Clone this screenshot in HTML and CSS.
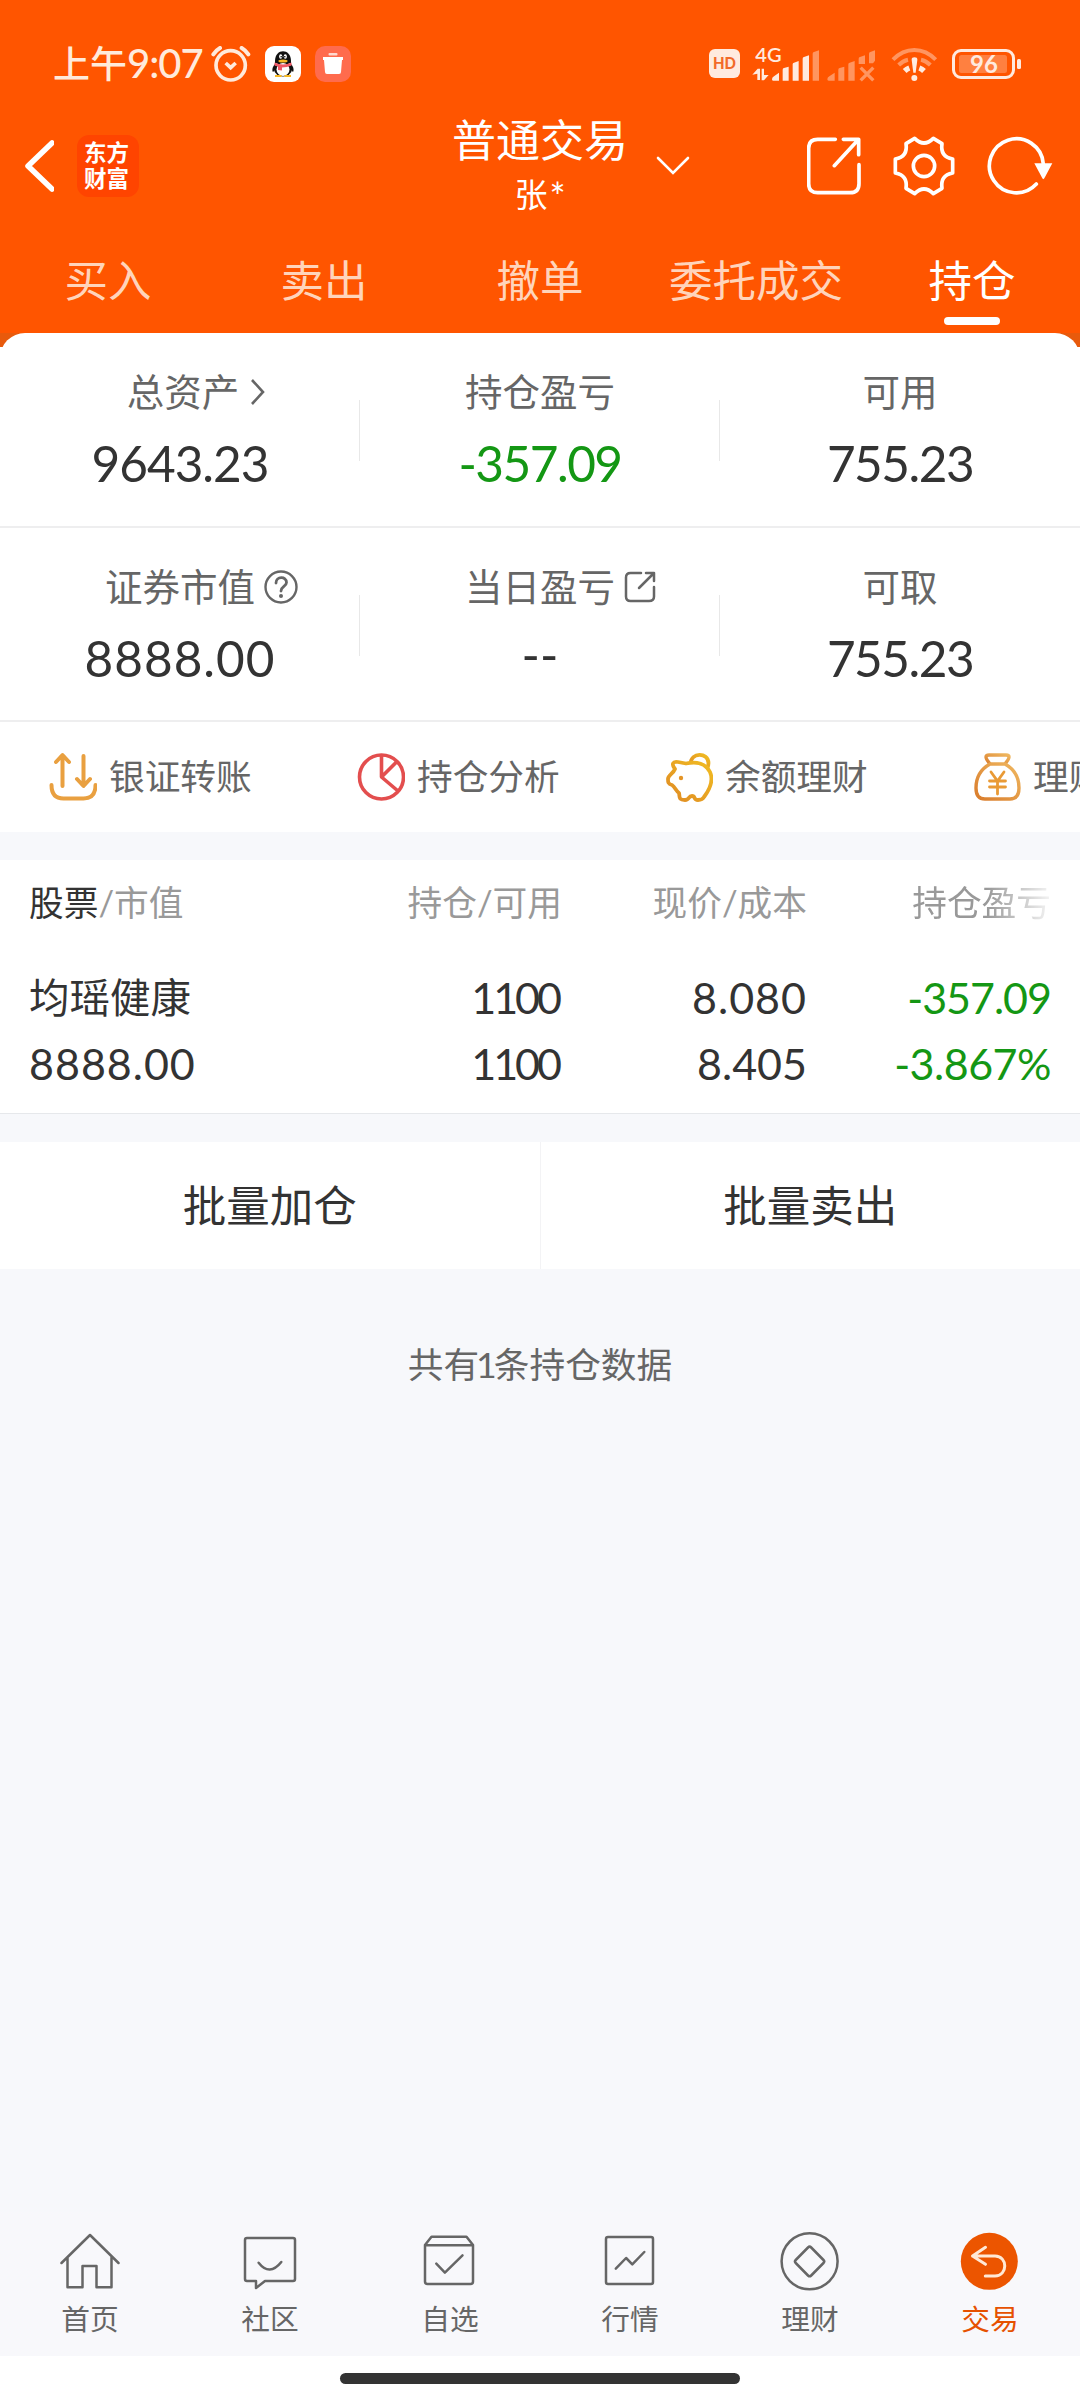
FILE: index.html
```html
<!DOCTYPE html>
<html lang="zh-CN">
<head>
    <meta charset="UTF-8">
    <meta name="viewport" content="width=device-width, initial-scale=1.0">
    <title>普通交易 - 持仓</title>
    <link rel="stylesheet" href="styles.css">
</head>
<body>
    <header class="header">
        <div class="status-bar">
            <span class="time">上午<span class="time-num">9:07</span></span>
            <svg class="alarm" width="40" height="36" viewBox="632 78 120 108">
                <g fill="none" stroke="#ffeadb" stroke-linecap="round">
                    <circle cx="691" cy="136" r="44" stroke-width="11"/>
                    <path d="M676 129l15 14 15-14" stroke-width="11" stroke-linecap="butt"/>
                    <path d="M639 103q8-12 20-19M744 103q-8-12-20-19" stroke-width="12"/>
                </g>
            </svg>
            <svg class="app-icon" width="36" height="36" viewBox="0 0 36 36">
                <rect width="36" height="36" rx="9" fill="#fff"/>
                <path d="M10 18c-3 3-3 7-2 8l2-2zM26 18c3 3 3 7 2 8l-2-2z" fill="#111"/>
                <ellipse cx="18" cy="23" rx="9" ry="7.5" fill="#111"/>
                <ellipse cx="18" cy="23.5" rx="6.5" ry="6.5" fill="#fff"/>
                <path d="M10 15c0-13 16-13 16 0v2H10z" fill="#111"/>
                <ellipse cx="15.7" cy="10.5" rx="1.6" ry="2.2" fill="#fff"/>
                <ellipse cx="20.3" cy="10.5" rx="1.6" ry="2.2" fill="#fff"/>
                <circle cx="16.2" cy="10.7" r=".8"/><circle cx="19.8" cy="10.7" r=".8"/>
                <ellipse cx="18" cy="15" rx="4.6" ry="1.5" fill="#f7b924"/>
                <path d="M9.500 16.500q8.500 4 17 0v3q-5 2-9.500 2v3l-4-.5v-3.500l-3.500-1z" fill="#ef5965"/>
                <path d="M10 30h6.500M19.500 30h6.500" stroke="#f7b924" stroke-width="2"/>
            </svg>
            <svg class="app-icon" width="36" height="36" viewBox="0 0 36 36">
                <rect width="36" height="36" rx="10" fill="#ff6b4d"/>
                <path d="M8 11h20v3h-1l-1 12q0 2-2 2H12q-2 0-2-2L9 14H8z" fill="#fff"/>
                <rect x="13.500" y="7" width="9" height="2.500" rx="1" fill="#ffd9cf"/>
            </svg>
            <div class="status-right">
                <svg class="hd" width="31" height="29" viewBox="0 0 31 29">
                    <rect width="31" height="29" rx="6" fill="#ffeadf"/>
                    <text x="15.500" y="20" text-anchor="middle" textLength="23" lengthAdjust="spacingAndGlyphs">HD</text>
                </svg>
                <svg class="signal" width="124" height="44" viewBox="212 64 372 132">
                    <text class="net" x="222" y="125" textLength="79" lengthAdjust="spacingAndGlyphs">4G</text>
                    <g fill="#ffeadf">
                        <path d="M213 162l16-18h7v34h-8v-19zM241 144h7v19h14l-14 16h-7z"/>
                        <path d="M272 176q0-6 6-9l15-11v24h-18q-3 0-3-4z"/>
                        <path d="M304 147q0-4 4-5l14-4v42h-18z"/>
                        <path d="M334 131q0-4 4-5l14-5v59h-18z"/>
                        <path d="M364 114q0-4 4-5l15-5v76h-19z"/>
                    </g>
                    <g fill="#ff9560">
                        <path d="M394 99q0-4 4-5l15-5v91h-19z"/>
                        <path d="M438 176q0-6 6-9l16-11v24h-18q-4 0-4-4z"/>
                        <path d="M471 147q0-4 4-5l14-4v42h-18z"/>
                        <path d="M501 131q0-4 4-5l15-5v59h-19z"/>
                        <path d="M532 114q0-4 4-5l15-5v26h-19z"/>
                        <path d="M563 99q0-4 4-5l14-5v31l-6 8h-12z"/>
                    </g>
                    <path d="M538 141l38 38M576 141l-38 38" stroke="#ff9560" stroke-width="10"/>
                </svg>
                <svg class="wifi" width="47" height="36" viewBox="631 78 141 108">
                    <g fill="none" stroke="#ff9560" stroke-width="12">
                        <path d="M637 119q28-29 64-29t64 29"/>
                        <path d="M654 135q13-13 28-16M749 135q-13-13-28-16"/>
                    </g>
                    <path d="M672 153q6-6 14-9M730 153q-6-6-14-9" fill="none" stroke="#ffeadf" stroke-width="16"/>
                    <path d="M693 119q0-7 8.500-7t8.500 7l-5 39h-7z" fill="#ffeadf"/>
                    <circle cx="701" cy="174" r="9" fill="#ffeadf"/>
                </svg>
                <svg class="battery" width="70" height="30" viewBox="0 0 70 30">
                    <rect x="1.500" y="1.500" width="60" height="27" rx="7.500" fill="none" stroke="#ffeadf" stroke-width="3"/>
                    <rect x="7" y="6" width="48" height="18" rx="2.500" fill="#ff8040"/>
                    <rect x="65" y="10" width="4" height="10" rx="1.500" fill="#ffeadf"/>
                    <text x="32" y="24" text-anchor="middle">96</text>
                </svg>
            </div>
        </div>

        <div class="title-bar">
            <div class="title-left">
                <svg width="29" height="52" viewBox="0 0 29 52">
                    <path d="M27 3L3 26l24 23" fill="none" stroke="#fff" stroke-width="5.500" stroke-linecap="round" stroke-linejoin="round"/>
                </svg>
                <div class="logo"><span>东方</span><span>财富</span></div>
            </div>
            <div class="title-center">
                <div class="title">
                    <div class="title-main">普通交易</div>
                    <div class="title-sub">张<span>*</span></div>
                </div>
                <svg class="title-arrow" width="34" height="20" viewBox="0 0 34 20">
                    <path d="M2 2l15 15L32 2" fill="none" stroke="#fff" stroke-width="2.600" stroke-linecap="round"/>
                </svg>
            </div>
            <div class="title-right">
                <svg width="54" height="58" viewBox="378 350 162 174">
                    <path d="M463 357h-53q-27 0-27 27v106q0 27 27 27h97q27 0 27-27v-57M487 357h46v46M531 359l-71 77" fill="none" stroke="#fff" stroke-width="11" stroke-linecap="round" stroke-linejoin="round"/>
                </svg>
                <svg width="62" height="60" viewBox="641 345 186 180">
                    <g fill="none" stroke="#fff" stroke-width="11" stroke-linejoin="round">
                        <path d="M706 352q28 28 56 0l26 16q-6 39 32 46v42q-38 7-32 46l-26 16q-28-28-56 0l-26-16q6-39-32-46v-42q38-7 32-46z"/>
                        <circle cx="734" cy="435" r="32"/>
                    </g>
                </svg>
                <svg width="66" height="60" viewBox="920 347 198 180">
                    <path d="M1089 431A81 81 0 1 0 1068 491" fill="none" stroke="#fff" stroke-width="11" stroke-linecap="round"/>
                    <path d="M1062 429h54l-24 45q-3 5-6 0z" fill="#fff"/>
                </svg>
            </div>
        </div>

        <nav class="tabs">
            <a class="tab">买入</a>
            <a class="tab">卖出</a>
            <a class="tab">撤单</a>
            <a class="tab">委托成交</a>
            <a class="tab active">持仓</a>
        </nav>
    </header>

    <section class="assets-wrap">
        <div class="assets">
            <div class="stat-row">
                <div class="stat">
                    <div class="stat-label total">总资产<svg class="stat-icon" width="16" height="28" viewBox="0 0 16 28"><path d="M2 2l11 12L2 26" fill="none" stroke="#666" stroke-width="2.600"/></svg>
                    </div>
                    <div class="stat-value">9643.23</div>
                </div>
                <div class="stat">
                    <div class="stat-label">持仓盈亏</div>
                    <div class="stat-value tight green">-357.09</div>
                </div>
                <div class="stat">
                    <div class="stat-label">可用</div>
                    <div class="stat-value tight">755.23</div>
                </div>
            </div>
            <div class="stat-row">
                <div class="stat">
                    <div class="stat-label">证券市值<svg class="stat-icon" width="34" height="34" viewBox="0 0 34 34">
                            <g fill="none" stroke="#666" stroke-width="2.400" stroke-linecap="round">
                                <circle cx="17" cy="17" r="15.500"/>
                                <path d="M12 13c0-7 10.500-7 10.500-.5 0 4-5.500 4-5.500 8.500" stroke-width="2.800"/>
                            </g>
                            <circle cx="17" cy="26" r="2" fill="#666"/>
                        </svg>
                    </div>
                    <div class="stat-value wide">8888.00</div>
                </div>
                <div class="stat">
                    <div class="stat-label">当日盈亏<svg class="stat-icon" width="32" height="32" viewBox="0 0 32 32">
                            <path d="M17 2H6.500Q2 2 2 6.500v19Q2 30 6.500 30H25q5 0 5-4.500V16M22 2h8v8M30 2L15 17" fill="none" stroke="#666" stroke-width="2.500" stroke-linecap="round" stroke-linejoin="round"/>
                        </svg>
                    </div>
                    <div class="stat-value dash">--</div>
                </div>
                <div class="stat">
                    <div class="stat-label">可取</div>
                    <div class="stat-value tight">755.23</div>
                </div>
            </div>
            <div class="quick">
                <a class="quick-item">
                    <svg width="48" height="50" viewBox="0 0 48 50">
                        <g fill="none" stroke="#e9a040" stroke-width="4" stroke-linecap="round" stroke-linejoin="round">
                            <path d="M2.500 33q0 13.500 12 13.500h20q12 0 12-13.500"/>
                            <path d="M13.500 34V4M7 10l6.500-7 6.500 7M34.500 4v29M28 27l6.500 7 6.500-7"/>
                        </g>
                    </svg>
                    <span>银证转账</span>
                </a>
                <a class="quick-item">
                    <svg width="48" height="50" viewBox="0 0 48 50">
                        <g fill="none" stroke="#e34e4e" stroke-width="3.600" stroke-linejoin="round">
                            <ellipse cx="24.500" cy="25" rx="22" ry="22"/>
                            <path d="M24.500 3v22L40 9.500M24.500 25L41 39"/>
                        </g>
                    </svg>
                    <span>持仓分析</span>
                </a>
                <a class="quick-item">
                    <svg width="48" height="50" viewBox="0 0 48 50">
                        <defs>
                            <linearGradient id="pig" x1="0" y1="1" x2="1" y2="0">
                                <stop offset="0" stop-color="#df8a24"/>
                                <stop offset="1" stop-color="#f1bd22"/>
                            </linearGradient>
                        </defs>
                        <g fill="none" stroke="url(#pig)" stroke-width="3.800" stroke-linejoin="round">
                            <path d="M25.500 12C26 0 43 0 43.500 11q0 3-1.500 6"/>
                            <path d="M10 17C6 12 8 9 13 10l8 1.500C32 9 41 12 45 20c4 9 0 17-6 25-1 2-2 3-6 3-5 0-2-4-6-4s-2 4-7 4c-7 0-5-3-6-7-3-2-4-6-7-8-4-1-4-3-4-6 0-4 5-5 7-10z"/>
                        </g>
                        <circle cx="16" cy="26" r="2.200" fill="#e49527"/>
                    </svg>
                    <span>余额理财</span>
                </a>
                <a class="quick-item">
                    <svg width="48" height="50" viewBox="0 0 48 50">
                        <defs>
                            <linearGradient id="bag" x1="0" y1="1" x2="1" y2="0">
                                <stop offset="0" stop-color="#d97c2c"/>
                                <stop offset="1" stop-color="#efb75f"/>
                            </linearGradient>
                        </defs>
                        <g fill="none" stroke="url(#bag)" stroke-width="3.400" stroke-linejoin="round">
                            <path d="M17 12q-4-5-4-7 0-2 3-2h17q3 0 3 2 0 2-4 7"/>
                            <path d="M17 12h15c9 5 14 14 14 24q0 11-9 11H12q-9 0-9-11c0-10 5-19 14-24z"/>
                        </g>
                        <path d="M18 20l6.500 9 6.500-9M16.500 29h16M16.500 35h16M24.500 29v13" fill="none" stroke="#e99a35" stroke-width="2.800" stroke-linecap="round"/>
                    </svg>
                    <span>理财</span>
                </a>
            </div>
        </div>
    </section>

    <section class="holdings">
        <div class="h-row h-head">
            <div><b>股票</b>/市值</div>
            <div>持仓/可用</div>
            <div>现价/成本</div>
            <div class="fade">持仓盈亏</div>
        </div>
        <div class="h-row">
            <div class="name">均瑶健康</div>
            <div class="ones">1100</div>
            <div class="price">8.080</div>
            <div class="green">-357.09</div>
        </div>
        <div class="h-row">
            <div class="market">8888.00</div>
            <div class="ones">1100</div>
            <div class="cost">8.405</div>
            <div class="green percent">-3.867%</div>
        </div>
    </section>

    <section class="batch">
        <a>批量加仓</a>
        <a>批量卖出</a>
    </section>

    <p class="count">共有<span>1</span>条持仓数据</p>

    <nav class="bottom-nav">
        <a class="nav-item">
            <svg width="60" height="60" viewBox="0 0 60 60"><path d="M1.500 32L30 4l28.500 28M7.500 26.500v29.800h15V35h14v21.300h15V26.500"/></svg>
            <span>首页</span>
        </a>
        <a class="nav-item">
            <svg width="60" height="60" viewBox="0 0 60 60"><path d="M7 7h46q2 0 2 2v39q0 2-2 2H25l-9 7v-7H7q-2 0-2-2V9q0-2 2-2z"/><path d="M18.600 31.700q11 14 22.700-.7"/></svg>
            <span>社区</span>
        </a>
        <a class="nav-item">
            <svg width="60" height="60" viewBox="0 0 60 60"><path d="M5 14l6.500-8.300h35L53 14v36.500q0 2.500-2.500 2.500h-43Q5 53 5 50.500zM5 14.300h48M16.300 32.700l8.600 9 17.600-17.400"/></svg>
            <span>自选</span>
        </a>
        <a class="nav-item">
            <svg width="60" height="60" viewBox="0 0 60 60"><rect x="6" y="6" width="47" height="47" rx="2"/><path d="M15.800 37.700L26.100 27l6.200 6.300L44.300 21"/></svg>
            <span>行情</span>
        </a>
        <a class="nav-item">
            <svg width="60" height="60" viewBox="0 0 60 60"><circle cx="29.600" cy="30.300" r="28"/><path d="M28 16.500q1.600-1.600 3.200 0L43.500 29q1.500 1.500 0 3L31.200 44.500q-1.600 1.600-3.200 0L15.700 32q-1.500-1.500 0-3z"/></svg>
            <span>理财</span>
        </a>
        <a class="nav-item current">
            <svg width="60" height="60" viewBox="0 0 60 60"><circle class="dot" cx="29.300" cy="30.300" r="28.500"/><path class="back" d="M25.500 16.300L12.500 25l13 8.300M12.500 25H35c13 0 13 20 0 20H25.300"/></svg>
            <span>交易</span>
        </a>
    </nav>
    <div class="home-bar"><i></i></div>
</body>
</html>
```
FILE: styles.css
```css
* {
    box-sizing: border-box;
}
body {
    margin: 0;
    width: 1080px;
    height: 2400px;
    display: flex;
    flex-direction: column;
    overflow: hidden;
    background: #f7f8fb;
    color: #333;
    font-family: Lato, "Noto Sans CJK SC", sans-serif;
}
svg {
    display: block;
    flex: none;
}
.green {
    color: #149714;
}

/* 顶部 */
.header {
    background: #ff5500;
    color: #fff;
    height: 333px;
    flex: none;
}
.status-bar {
    height: 113px;
    padding: 14px 58px 0 53px;
    display: flex;
    align-items: center;
    color: #ffeadb;
}
.time {
    width: 158px;
    font-size: 37px;
    font-weight: 500;
    line-height: 40px;
    white-space: nowrap;
}
.time-num {
    font-size: 40px;
    letter-spacing: -1px;
}
.app-icon {
    margin-left: 14px;
}
.app-icon:first-of-type {
    margin-left: 13px;
}
.status-right {
    margin-left: auto;
    display: flex;
    align-items: center;
}
.hd text {
    font-size: 16px;
    font-weight: 900;
    fill: #f26a2a;
}
.signal {
    margin-left: 12px;
}
.net {
    font-size: 60px;
    font-weight: 600;
    fill: #ffeadf;
}
.wifi {
    margin-left: 15px;
}
.battery {
    margin-left: 14px;
}
.battery text {
    font-size: 24px;
    font-weight: 700;
    fill: #ffeadf;
}

.title-bar {
    height: 107px;
    display: grid;
    grid-template-columns: 380px 320px 380px;
    align-items: center;
}
.title-left {
    display: flex;
    align-items: center;
    padding-left: 25px;
    padding-bottom: 2px;
}
.logo {
    width: 62px;
    height: 62px;
    margin-left: 23px;
    padding-right: 3px;
    border-radius: 12px;
    background: #ff4400;
    display: flex;
    flex-direction: column;
    align-items: center;
    justify-content: center;
    font-size: 22.5px;
    font-weight: 700;
    line-height: 26px;
}
.title-center {
    display: flex;
    align-items: center;
    justify-content: center;
}
.title {
    text-align: center;
    margin-left: -1px;
}
.title-main {
    font-size: 44px;
    line-height: 55px;
}
.title-sub {
    font-size: 33px;
    line-height: 52px;
}
.title-sub span {
    margin-left: 2px;
    font-size: 38px;
    line-height: 40px;
    vertical-align: -4px;
}
.title-arrow {
    margin: 0 -63px 2px 28px;
}
.title-right {
    display: flex;
    align-items: center;
    justify-content: flex-end;
    padding: 0 27px 2px 0;
}
.title-right svg + svg {
    margin-left: 32px;
}

.tabs {
    height: 113px;
    display: flex;
    padding-top: 30px;
}
.tab {
    flex: 1;
    position: relative;
    text-align: center;
    font-size: 43.5px;
    line-height: 60px;
    color: #ffd4bb;
}
.tab.active {
    color: #fff;
}
.tab.active::after {
    content: "";
    position: absolute;
    left: 50%;
    bottom: 8px;
    width: 56px;
    height: 8px;
    margin-left: -28px;
    border-radius: 4px;
    background: #fff;
}

/* 资产 */
.assets-wrap {
    flex: none;
    height: 499px;
    background: linear-gradient(#e85a0c 14px, #fff 14px);
}
.assets {
    background: #fff;
    border-radius: 25px 25px 0 0;
}
.stat-row {
    display: flex;
    height: 194px;
    border-bottom: 2px solid #eeeeef;
}
.stat-row:first-child {
    height: 195px;
}
.stat {
    flex: 1;
    position: relative;
    padding-top: 33px;
}
.stat + .stat::before {
    content: "";
    position: absolute;
    left: -1px;
    top: 67px;
    width: 1px;
    height: 61px;
    background: #e8e8e8;
}
.stat-label {
    display: flex;
    justify-content: center;
    align-items: center;
    height: 51px;
    font-size: 37.5px;
    line-height: 51px;
    color: #666;
}
.stat-icon {
    margin: 0 -43px 0 9px;
}
.stat-icon[width="32"] {
    margin-right: -41px;
}
.stat-icon[width="16"] {
    margin-left: 11px;
    margin-right: -27px;
}
.total {
    padding-left: 6px;
}
.stat-value {
    height: 90px;
    line-height: 93px;
    font-size: 49.5px;
    text-align: center;
    letter-spacing: -1px;
}
.stat-value.tight {
    letter-spacing: -1.5px;
}
.stat-value.wide {
    letter-spacing: 1px;
}
.stat-value.dash {
    letter-spacing: 0;
    line-height: 85px;
}

.quick {
    display: flex;
    height: 110px;
    padding-left: 49px;
    overflow: hidden;
}
.quick-item {
    flex: 0 0 308px;
    display: flex;
    align-items: center;
    gap: 12px;
    font-size: 35.7px;
    line-height: 50px;
    color: #666;
    white-space: nowrap;
}

/* 持仓列表 */
.holdings {
    flex: none;
    height: 254px;
    margin-top: 28px;
    background: #fff;
    border-bottom: 1px solid #e6e8eb;
}
.h-row {
    display: grid;
    grid-template-columns: 288px 245px 245px 244px;
    padding-left: 29px;
    height: 66px;
    line-height: 67px;
    font-size: 43px;
}
.h-row > div + div {
    text-align: right;
}
.h-row .green {
    letter-spacing: -1px;
}
.h-row .percent {
    letter-spacing: -.5px;
}
.h-head {
    height: 104px;
    line-height: 86px;
    font-size: 34.7px;
    color: #999;
}
.h-head b {
    font-weight: 400;
    color: #333;
}
.fade {
    -webkit-mask-image: linear-gradient(to right, #000 180px, rgba(0, 0, 0, .1) 244px);
    mask-image: linear-gradient(to right, #000 180px, rgba(0, 0, 0, .1) 244px);
}
.name {
    font-size: 40.5px;
}
.market {
    letter-spacing: 1px;
}
.ones {
    letter-spacing: -3px;
    padding-right: 3px;
}
.price {
    letter-spacing: 1px;
}
.cost {
    letter-spacing: 0;
}

.batch {
    flex: none;
    display: flex;
    height: 127px;
    margin-top: 28px;
    background: #fff;
}
.batch a {
    flex: 1;
    text-align: center;
    font-size: 43.5px;
    line-height: 127px;
}
.batch a:first-child {
    border-right: 1px solid #f3f3f5;
}
.count {
    margin: 66px 0 0;
    text-align: center;
    font-size: 35.7px;
    line-height: 60px;
    color: #666;
}
.count span {
    margin: 0 -3px;
}

/* 底部导航 */
.bottom-nav {
    flex: none;
    margin-top: auto;
    display: flex;
    height: 144px;
    padding-top: 19px;
    background: #f8f8fb;
}
.nav-item {
    flex: 1;
    display: flex;
    flex-direction: column;
    align-items: center;
    font-size: 28.7px;
    line-height: 40px;
    color: #666;
}
.nav-item svg {
    margin-bottom: 8px;
    fill: none;
    stroke: #666;
    stroke-width: 2.5;
    stroke-linecap: round;
    stroke-linejoin: round;
}
.nav-item.current {
    color: #e65100;
}
.nav-item .dot {
    fill: #ec5500;
    stroke: none;
}
.nav-item .back {
    stroke: #ffe9d6;
    stroke-width: 3;
}
.home-bar {
    flex: none;
    height: 44px;
    padding-top: 17px;
    background: #fff;
}
.home-bar i {
    display: block;
    width: 400px;
    height: 11px;
    margin: 0 auto;
    border-radius: 6px;
    background: #333;
}
```
